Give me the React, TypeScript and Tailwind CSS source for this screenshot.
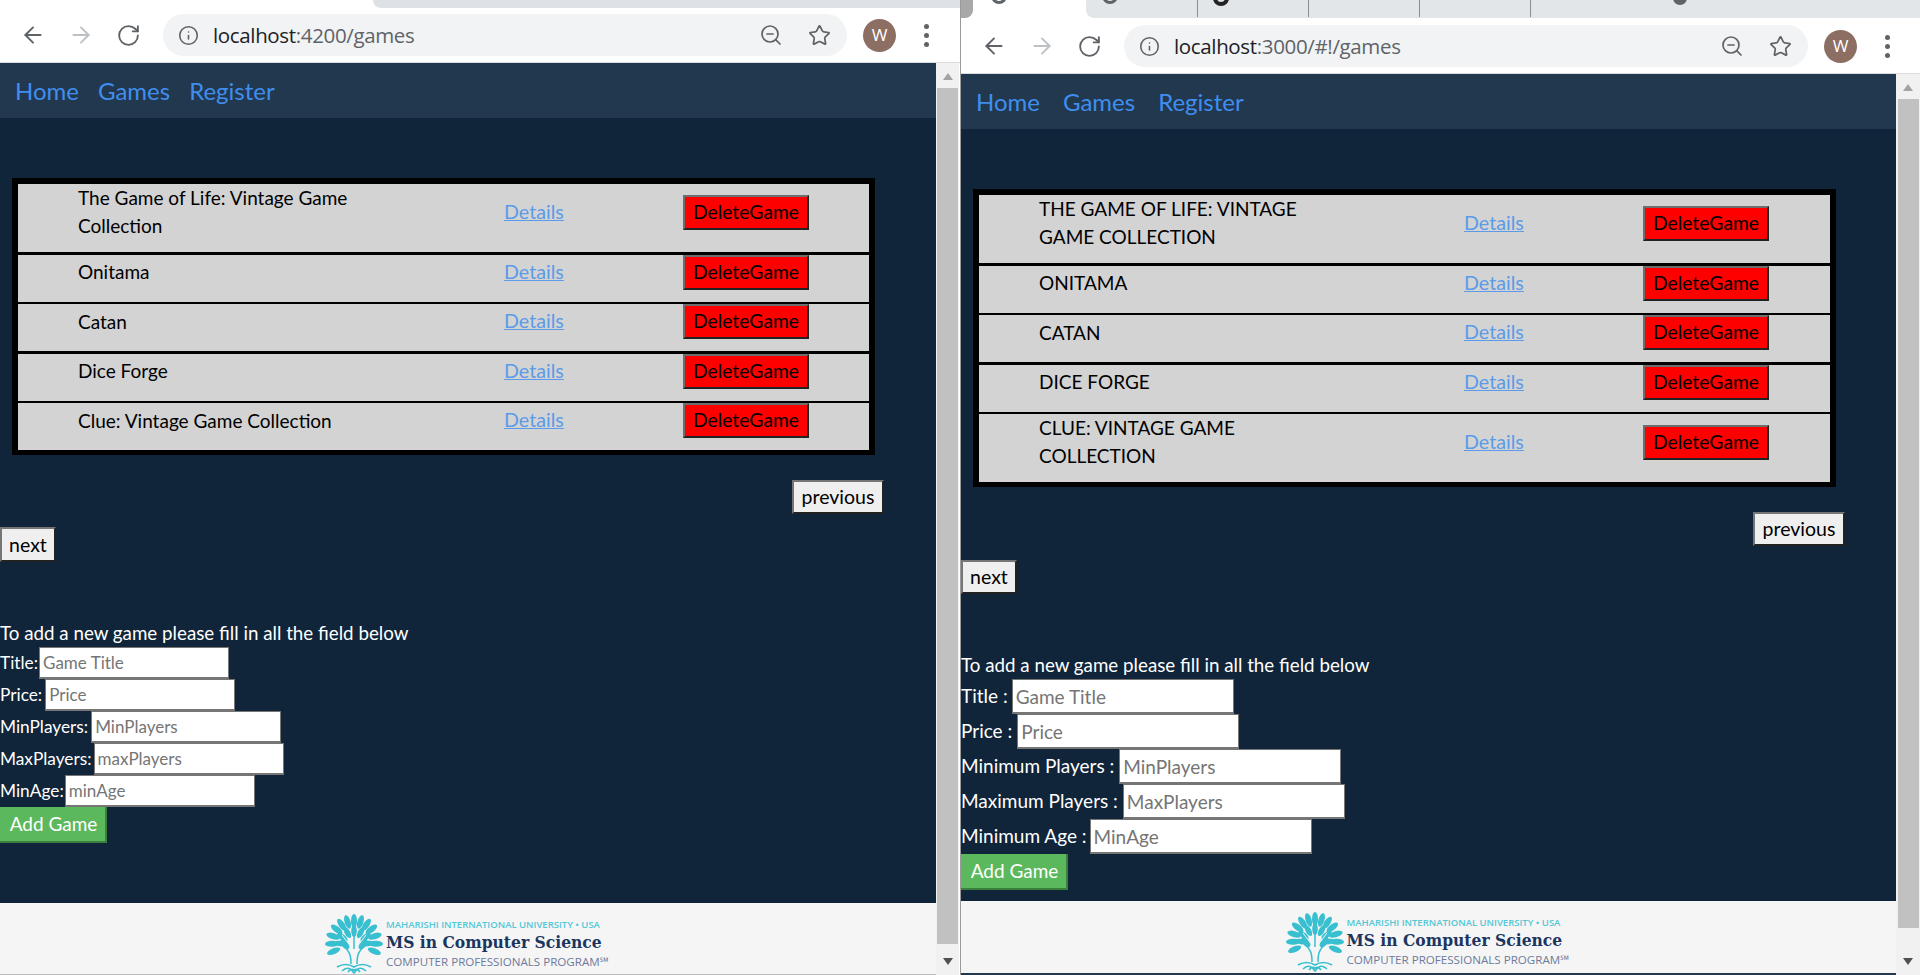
import { ArrowLeft, ArrowRight, Info, RotateCw, Star, ZoomOut } from "lucide-react";
import { clsx } from "clsx";

const games = [
  "The Game of Life: Vintage Game Collection",
  "Onitama",
  "Catan",
  "Dice Forge",
  "Clue: Vintage Game Collection",
];

const leftFields = [
  { label: "Title:", placeholder: "Game Title", gap: "ml-px" },
  { label: "Price:", placeholder: "Price", gap: "ml-[3px]" },
  { label: "MinPlayers:", placeholder: "MinPlayers", gap: "ml-[3px]" },
  { label: "MaxPlayers:", placeholder: "maxPlayers", gap: "ml-[2px]" },
  { label: "MinAge:", placeholder: "minAge", gap: "ml-px" },
];

const rightFields = [
  { label: "Title :", placeholder: "Game Title", gap: "ml-[4px]" },
  { label: "Price :", placeholder: "Price", gap: "ml-[5px]" },
  { label: "Minimum Players :", placeholder: "MinPlayers", gap: "ml-[5px]" },
  { label: "Maximum Players :", placeholder: "MaxPlayers", gap: "ml-[5px]" },
  { label: "Minimum Age :", placeholder: "MinAge", gap: "ml-[3px]" },
];

const outerLeaves = [-112, -92, -72, -52, -34, -17, 0, 17, 34, 52, 72, 92, 112];
const innerLeaves = [-84, -56, -28, 0, 28, 56, 84];

function Toolbar(props: { host: string; path: string }) {
  return (
    <div className="flex h-[55px] shrink-0 items-center border-b border-[#dadce0] bg-white">
      <ArrowLeft className="ml-[20px] text-[#5f6368]" size={26} strokeWidth={1.8} />
      <ArrowRight className="ml-[22px] text-[#bdc1c6]" size={26} strokeWidth={1.8} />
      <RotateCw className="ml-[22px] text-[#5f6368]" size={25} strokeWidth={1.8} />
      <div className="ml-[22px] flex h-[42px] w-[684px] items-center rounded-full bg-[#f1f3f4]">
        <Info className="ml-[15px] text-[#5f6368]" size={21} strokeWidth={1.8} />
        <span className="ml-[14px] font-['Open_Sans',sans-serif] text-[20.5px] tracking-[-0.35px] text-[#202124]">
          {props.host}
          <span className="text-[#5f6368]">{props.path}</span>
        </span>
        <ZoomOut className="ml-auto text-[#5f6368]" size={24} strokeWidth={1.7} />
        <Star className="mr-[16px] ml-[25px] text-[#5f6368]" size={23} strokeWidth={1.8} />
      </div>
      <div className="ml-[16px] flex size-[33px] items-center justify-center rounded-full bg-[#8d6e63] font-['Open_Sans',sans-serif] text-[17px] text-white">
        W
      </div>
      <div className="ml-[28px] flex flex-col gap-[4px]">
        <span className="size-[5px] rounded-full bg-[#5f6368]" />
        <span className="size-[5px] rounded-full bg-[#5f6368]" />
        <span className="size-[5px] rounded-full bg-[#5f6368]" />
      </div>
    </div>
  );
}

function Nav(props: { gap: string }) {
  return (
    <nav className={clsx("flex h-[55px] shrink-0 items-center bg-[#22384f] pl-[15px] text-[24px] text-[#3f8eee]", props.gap)}>
      <a>Home</a>
      <a>Games</a>
      <a>Register</a>
    </nav>
  );
}

function GameTable(props: { upper: boolean; columns: string }) {
  return (
    <div className="ml-[12px] flex w-[863px] flex-col gap-[2.5px] border-x-[6px] border-t-[6px] border-b-[5px] border-black bg-black">
      {games.map((game) => (
        <div key={game} className={clsx("grid items-center bg-[#d3d3d3] pb-3", props.columns)}>
          <span />
          <p className={clsx("w-[285px] text-[19px] leading-[28px] text-black", props.upper && "uppercase")}>{game}</p>
          <a className="pb-px text-[19.7px] text-[#5b9be8] underline">Details</a>
          <button className="h-[35px] w-[126px] border-2 border-t-[#6e6e6e] border-r-[#222] border-b-[#222] border-l-[#6e6e6e] bg-[#ff0000] text-[19.3px] text-black">
            DeleteGame
          </button>
        </div>
      ))}
    </div>
  );
}

function PagerButton(props: { label: string; className: string }) {
  return (
    <button className={clsx("block h-[34px] border-2 border-t-[#767676] border-r-[#222] border-b-[#222] border-l-[#767676] bg-[#efefef] text-[19.5px] text-black", props.className)}>
      {props.label}
    </button>
  );
}

function GameForm(props: {
  fields: { label: string; placeholder: string; gap: string }[];
  inputClass: string;
  rowClass: string;
}) {
  return (
    <div className="mt-[57px] text-white">
      <p className="text-[18.75px] leading-[28px]">To add a new game please fill in all the field below</p>
      {props.fields.map((field) => (
        <div key={field.label} className={clsx("flex items-center", props.rowClass)}>
          <label>{field.label}</label>
          <input
            className={clsx("border border-b-2 border-[#767676] bg-white pl-[3px] placeholder:text-[#757575]", field.gap, props.inputClass)}
            placeholder={field.placeholder}
            readOnly
          />
        </div>
      ))}
      <button className="block h-[36px] w-[107px] border-r-2 border-b-2 border-r-[#3b7f3d] border-b-[#3b7f3d] bg-[#5cb85c] pl-[2px] text-[19px] text-white">
        Add Game
      </button>
    </div>
  );
}

function TreeLogo() {
  return (
    <svg width="58" height="61" viewBox="0 0 58 61" fill="none" className="shrink-0">
      <g fill="#38bfd0">
        {outerLeaves.map((angle) => (
          <ellipse key={angle} cx="29" cy="8" rx="3" ry="7" transform={`rotate(${angle} 29 30)`} />
        ))}
        {innerLeaves.map((angle) => (
          <ellipse key={angle} cx="29" cy="18" rx="2.8" ry="6" transform={`rotate(${angle} 29 32)`} />
        ))}
        <ellipse cx="20" cy="31" rx="3.5" ry="6" transform="rotate(-35 20 31)" />
        <ellipse cx="38" cy="31" rx="3.5" ry="6" transform="rotate(35 38 31)" />
      </g>
      <path d="M26 51 C26 43 26 39 14 28 M32 51 C32 43 32 39 44 28 M29 36 V22" stroke="#38bfd0" strokeWidth="1.5" />
      <path d="M29 38 L17 22 M29 38 L41 22" stroke="#f5f5f5" strokeWidth="1" />
      <path d="M12 54 C19 50 24 51 29 54 C34 51 39 50 46 54 M17 58 C21 54 25 54 29 60 C33 54 37 54 41 58 M23 59 C25 56 27 56 29 57 C31 56 33 56 35 59" stroke="#38bfd0" strokeWidth="1.6" />
    </svg>
  );
}

function Footer(props: { className: string }) {
  return (
    <footer className={clsx("mt-auto flex shrink-0 items-start justify-center bg-[#f5f5f5] pt-[10px]", props.className)}>
      <TreeLogo />
      <div className="ml-[3px] flex w-[225px] flex-col pt-[6px]">
        <span className="font-['Open_Sans',sans-serif] text-[9.5px] leading-[12px] font-semibold whitespace-nowrap text-[#52c7d6]">
          MAHARISHI INTERNATIONAL UNIVERSITY • USA
        </span>
        <span className="font-['DejaVu_Serif_Condensed','DejaVu_Serif',serif] text-[17.3px] leading-[23px] font-bold whitespace-nowrap text-[#1b3560]">
          MS in Computer Science
        </span>
        <span className="font-['Open_Sans',sans-serif] text-[11.6px] leading-[15px] whitespace-nowrap text-[#6d7b9d]">
          COMPUTER PROFESSIONALS PROGRAM℠
        </span>
      </div>
    </footer>
  );
}

function Scrollbar(props: { width: string; thumb: string }) {
  return (
    <div className={clsx("flex shrink-0 flex-col items-center bg-[#f1f1f1] pt-[10px] pb-[10px]", props.width)}>
      <span className="h-0 w-0 border-x-[5px] border-b-[7px] border-x-transparent border-b-[#a3a3a3]" />
      <div className={clsx("mt-[8px] w-[21px] bg-[#c1c1c1]", props.thumb)} />
      <span className="mt-auto h-0 w-0 border-x-[5px] border-t-[7px] border-x-transparent border-t-[#505050]" />
    </div>
  );
}

function TabRing(props: { className: string }) {
  return <span className={clsx("mt-[-12px] block size-[16px] shrink-0 rounded-full border-[3px] border-[#5f6368]", props.className)} />;
}

function TabDivider(props: { className: string }) {
  return <span className={clsx("block h-[17px] w-px shrink-0 bg-[#8a8d91]", props.className)} />;
}

export default function App() {
  return (
    <div className="flex h-[975px] w-[1920px] overflow-hidden bg-white font-['Lato',sans-serif] text-[18px]">
      <section className="flex w-[961px] shrink-0 flex-col border-r border-[#9a9a9a]">
        <div className="flex h-[8px] shrink-0 bg-white">
          <div className="ml-[373px] flex-1 rounded-bl-lg bg-[#dee1e6]" />
        </div>
        <Toolbar host="localhost" path=":4200/games" />
        <div className="flex min-h-0 flex-1">
          <main className="flex w-[936px] flex-col bg-[#10243a] text-[17.3px]">
            <Nav gap="gap-[19px]" />
            <div className="h-[60px] shrink-0" />
            <GameTable upper={false} columns="grid-cols-[60px_426px_179px_1fr]" />
            <PagerButton label="previous" className="mt-[25px] ml-[792px] w-[92px]" />
            <PagerButton label="next" className="mt-[13px] h-[35px] w-[56px]" />
            <GameForm fields={leftFields} inputClass="h-[32px] w-[190px] text-[17px]" rowClass="h-[32px]" />
            <Footer className="h-[72px] border-b border-[#bdbdbd]" />
          </main>
          <Scrollbar width="w-[23px]" thumb="h-[856px]" />
        </div>
      </section>
      <section className="flex min-w-0 flex-1 flex-col">
        <div className="flex h-[19px] shrink-0 overflow-hidden bg-white">
          <div className="h-[18px] w-[12px] shrink-0 rounded-br-lg bg-[#a8a8a8]" />
          <TabRing className="ml-[18px]" />
          <div className="ml-[79px] flex h-[18px] flex-1 rounded-bl-lg bg-[#e3e6e9]">
            <TabRing className="ml-[16px]" />
            <TabDivider className="ml-[79px]" />
            <span className="mt-[-10px] ml-[15px] block size-[16px] rounded-full border-[4px] border-[#222]" />
            <TabDivider className="ml-[79px]" />
            <TabDivider className="ml-[110px]" />
            <TabDivider className="ml-[110px]" />
            <span className="mt-[-9px] ml-[142px] block size-[14px] rounded-full bg-[#5f6368]" />
          </div>
        </div>
        <Toolbar host="localhost" path=":3000/#!/games" />
        <div className="flex min-h-0 flex-1">
          <main className="flex min-w-0 flex-1 flex-col bg-[#10243a] text-[19px]">
            <Nav gap="gap-[23px]" />
            <div className="h-[60px] shrink-0" />
            <GameTable upper={true} columns="grid-cols-[60px_425px_179px_1fr]" />
            <PagerButton label="previous" className="mt-[25px] ml-[792px] w-[92px]" />
            <PagerButton label="next" className="mt-[14px] h-[33px] w-[56px]" />
            <GameForm fields={rightFields} inputClass="h-[35px] w-[222px] text-[19px]" rowClass="h-[35px]" />
            <Footer className="h-[74px] border-b-2 border-[#22384f]" />
          </main>
          <Scrollbar width="w-[24px]" thumb="h-[829px]" />
        </div>
      </section>
    </div>
  );
}
